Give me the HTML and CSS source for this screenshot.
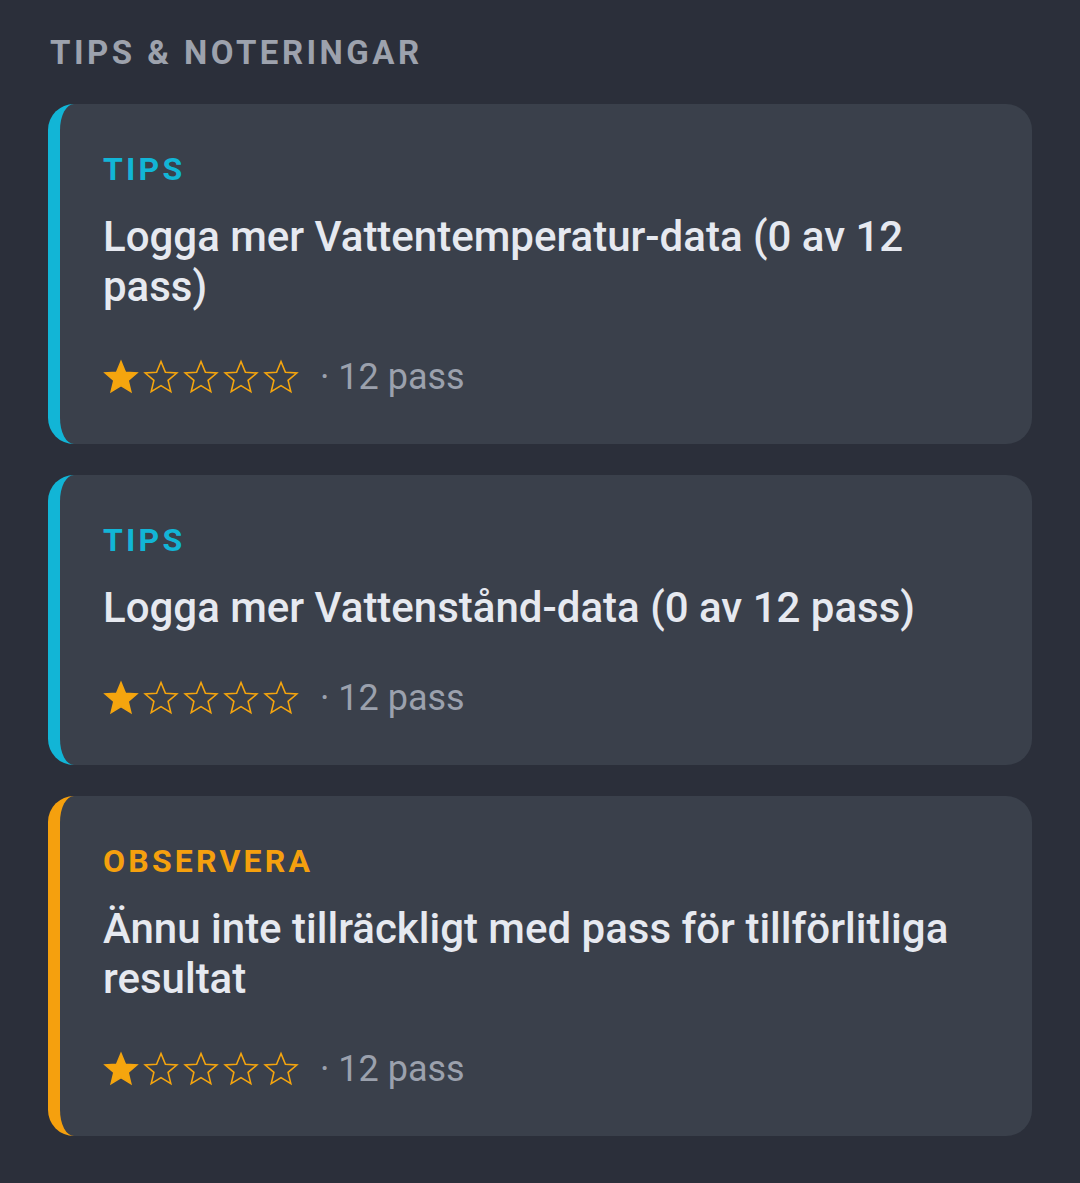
FILE: index.html
```html
<!DOCTYPE html>
<html lang="sv">
<head>
<meta charset="utf-8">
<title>Tips &amp; noteringar</title>
<link rel="stylesheet" href="styles.css">
</head>
<body>
<svg width="0" height="0" class="defs" aria-hidden="true">
  <defs>
    <path id="star" d="M18 2.5 L22.4 13.2 L33.8 14 L25.1 21.4 L27.8 32.6 L18 26.6 L8.2 32.6 L10.9 21.4 L2.2 14 L13.6 13.2 Z"/>
  </defs>
</svg>
<main class="page">
  <h2 class="section-title">TIPS &amp; NOTERINGAR</h2>

  <article class="card card-tip">
    <div class="card-label">TIPS</div>
    <div class="card-title">Logga mer Vattentemperatur-data (0 av 12 pass)</div>
    <div class="card-meta">
      <span class="stars">
        <svg class="star full" viewBox="0 0 36 36"><use href="#star"/></svg>
        <svg class="star" viewBox="0 0 36 36"><use href="#star"/></svg>
        <svg class="star" viewBox="0 0 36 36"><use href="#star"/></svg>
        <svg class="star" viewBox="0 0 36 36"><use href="#star"/></svg>
        <svg class="star" viewBox="0 0 36 36"><use href="#star"/></svg>
      </span>
      <span class="count">· 12 pass</span>
    </div>
  </article>

  <article class="card card-tip">
    <div class="card-label">TIPS</div>
    <div class="card-title">Logga mer Vattenstånd-data (0 av 12 pass)</div>
    <div class="card-meta">
      <span class="stars">
        <svg class="star full" viewBox="0 0 36 36"><use href="#star"/></svg>
        <svg class="star" viewBox="0 0 36 36"><use href="#star"/></svg>
        <svg class="star" viewBox="0 0 36 36"><use href="#star"/></svg>
        <svg class="star" viewBox="0 0 36 36"><use href="#star"/></svg>
        <svg class="star" viewBox="0 0 36 36"><use href="#star"/></svg>
      </span>
      <span class="count">· 12 pass</span>
    </div>
  </article>

  <article class="card card-warn">
    <div class="card-label">OBSERVERA</div>
    <div class="card-title">Ännu inte tillräckligt med pass för tillförlitliga resultat</div>
    <div class="card-meta">
      <span class="stars">
        <svg class="star full" viewBox="0 0 36 36"><use href="#star"/></svg>
        <svg class="star" viewBox="0 0 36 36"><use href="#star"/></svg>
        <svg class="star" viewBox="0 0 36 36"><use href="#star"/></svg>
        <svg class="star" viewBox="0 0 36 36"><use href="#star"/></svg>
        <svg class="star" viewBox="0 0 36 36"><use href="#star"/></svg>
      </span>
      <span class="count">· 12 pass</span>
    </div>
  </article>
</main>
</body>
</html>
```

FILE: styles.css
```css
html, body {
  margin: 0;
  padding: 0;
  background: #2b2f3a;
}

body {
  font-family: Roboto, "Noto Sans", "Liberation Sans", sans-serif;
  color: #e6e8ee;
}

.defs {
  position: absolute;
  width: 0;
  height: 0;
}

.page {
  padding: 33px 48px 48px 48px;
  display: flex;
  flex-direction: column;
  gap: 31px;
}

.section-title {
  margin: 0 0 0 2px;
  font-size: 33px;
  line-height: 40px;
  font-weight: 700;
  letter-spacing: 0.105em;
  color: #9da2ad;
}

.card {
  background: #3a404b;
  border-radius: 26px;
  border-left: 12px solid #12b5d6;
  padding: 45px 60px 47px 43px;
  display: flex;
  flex-direction: column;
}

.card-warn {
  border-left-color: #f5a00e;
}

.card-label {
  font-size: 32px;
  line-height: 40px;
  font-weight: 700;
  letter-spacing: 0.1em;
  color: #12b5d6;
}

.card-warn .card-label {
  color: #f5a00e;
}

.card-title {
  margin-top: 23px;
  font-size: 42px;
  line-height: 50px;
  font-weight: 500;
  color: #e6e9f0;
}

.card-meta {
  margin-top: 45px;
  display: flex;
  align-items: center;
  gap: 21px;
  height: 40px;
}

.stars {
  display: flex;
  gap: 4px;
}

.star {
  width: 36px;
  height: 36px;
  fill: none;
  stroke: #f5a50e;
  stroke-width: 1.6;
  stroke-linejoin: miter;
}

.star.full {
  fill: #f5a50e;
}

.count {
  font-size: 36px;
  font-weight: 400;
  color: #9ba1ad;
}
```
